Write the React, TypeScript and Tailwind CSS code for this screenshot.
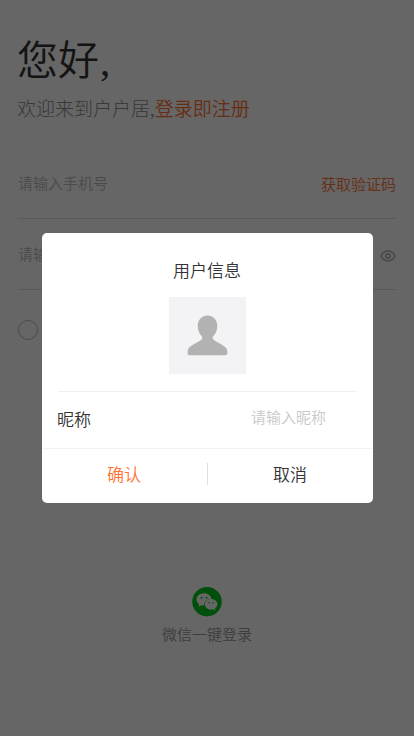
import React from "react";

const Eye = () => (
  <svg width="16" height="12" viewBox="0 0 16 12" fill="none" stroke="#b0b0b0" strokeWidth="1.500">
    <path d="M.9 6C2.500 2.800 5 1.100 8 1.100S13.500 2.800 15.100 6C13.500 9.200 11 10.900 8 10.900S2.500 9.200.9 6Z" />
    <circle cx="8" cy="6" r="2.200" />
  </svg>
);

const WeChat = () => (
  <svg width="30" height="30" viewBox="0 0 30 30">
    <circle cx="15" cy="14.700" r="14.700" fill="#00c81e" />
    <path fill="#fff" d="M12 6.200c-4.200 0-7.500 2.800-7.500 6.300 0 2 1.100 3.700 2.800 4.900l-.8 2.300 2.700-1.400c.9.300 1.900.4 2.900.4-.2-3.900 3-7 7.300-7-.7-3.200-3.700-5.500-7.400-5.500Z" />
    <path fill="#fff" d="M19.200 12c-3.600 0-6.300 2.300-6.300 5.200s2.700 5.300 6.300 5.300c.8 0 1.500-.1 2.200-.3l2.100 1.200-.6-2c1.500-1 2.500-2.500 2.500-4.200 0-2.900-2.700-5.200-6.200-5.200Z" />
    <g fill="#00c81e">
      <circle cx="9.500" cy="10.700" r="1" />
      <circle cx="14.500" cy="10.700" r="1" />
      <circle cx="17.100" cy="15.700" r=".8" />
      <circle cx="21.300" cy="15.700" r=".8" />
    </g>
  </svg>
);

const Avatar = () => (
  <svg width="77" height="77" viewBox="0 0 77 77" className="bg-[#f3f3f5]">
    <path
      fill="#b2b2b2"
      d="M38.500 18.500c-5.600 0-9.800 4.300-9.800 10.300 0 4.600 1.500 7.800 4.300 10.700.7 1 .4 2.200-.7 3.200-2.500 2.200-8.300 4.300-12 7.800-1.300 1.200-1.600 2.500-1.600 4.200v1.800c0 1.100.6 1.700 1.700 1.700h36.200c1.100 0 1.700-.6 1.700-1.700v-1.800c0-1.700-.3-3-1.600-4.200-3.700-3.500-9.500-5.600-12-7.800-1.100-1-1.400-2.200-.7-3.200 2.800-2.900 4.300-6.100 4.300-10.700 0-6-4.200-10.300-9.800-10.300Z"
    />
  </svg>
);

export default function App() {
  return (
    <div className="relative h-[736px] w-full overflow-hidden bg-white font-['Liberation_Serif','Noto_Sans_CJK_SC',sans-serif] font-[350] text-[#333]">
      <main className="flex h-full flex-col px-[18px] pt-[31px]">
        <h1 className="-ml-px h-[60px] text-[41px] leading-[60px]">
          您好<span className="ml-px">,</span>
        </h1>
        <p className="-ml-px mt-[4px] h-[30px] whitespace-nowrap text-[19px] font-light leading-[30px] text-[#8c8c8c]">
          欢迎来到户户居,<span className="text-[#ff7333] font-[350]">登录即注册</span>
        </p>
        <div className="mt-[23px] flex h-[71px] items-center justify-between border-b border-[#e2e2e2] text-[15px]">
          <span className="pt-[2px] text-[#bbb]">请输入手机号</span>
          <span className="pt-[4px] text-[#ff7333]">获取验证码</span>
        </div>
        <div className="flex h-[71px] items-center justify-between border-b border-[#e2e2e2] text-[15px]">
          <span className="pt-[2px] text-[#bbb]">请输入验证码</span>
          <span className="pt-1">
            <Eye />
          </span>
        </div>
        <div className="mt-[30px] size-5 rounded-full border border-[#bbb]" />
        <div className="mt-auto flex h-[149px] flex-col items-center">
          <WeChat />
          <span className="mt-[6px] text-[15px] leading-[24px] text-[#999]">微信一键登录</span>
        </div>
      </main>

      <div className="absolute inset-0 bg-black/60" />

      <section className="absolute left-[42px] top-[233px] flex h-[270px] w-[331px] flex-col rounded-[5px] bg-white text-[17px]">
        <div className="mx-4 flex h-[159px] flex-col items-center border-b border-[#f0f0f0] pt-[26px]">
          <h2 className="mr-px h-[26px] leading-[26px]">用户信息</h2>
          <div className="mt-[12px]">
            <Avatar />
          </div>
        </div>
        <div className="flex h-[57px] items-center border-b border-[#f3f3f3] pl-[15px] pr-4">
          <span className="w-[194px] pt-[2px]">昵称</span>
          <span className="pb-[3px] text-[15px] text-[#c8c8c8]">请输入昵称</span>
        </div>
        <div className="flex flex-1 items-center">
          <button className="flex-1 pb-px pr-px text-[#ff7333]">确认</button>
          <i className="mb-1 h-[22px] w-px bg-[#e0e0e0]" />
          <button className="flex-1 pb-px pr-px">取消</button>
        </div>
      </section>
    </div>
  );
}
